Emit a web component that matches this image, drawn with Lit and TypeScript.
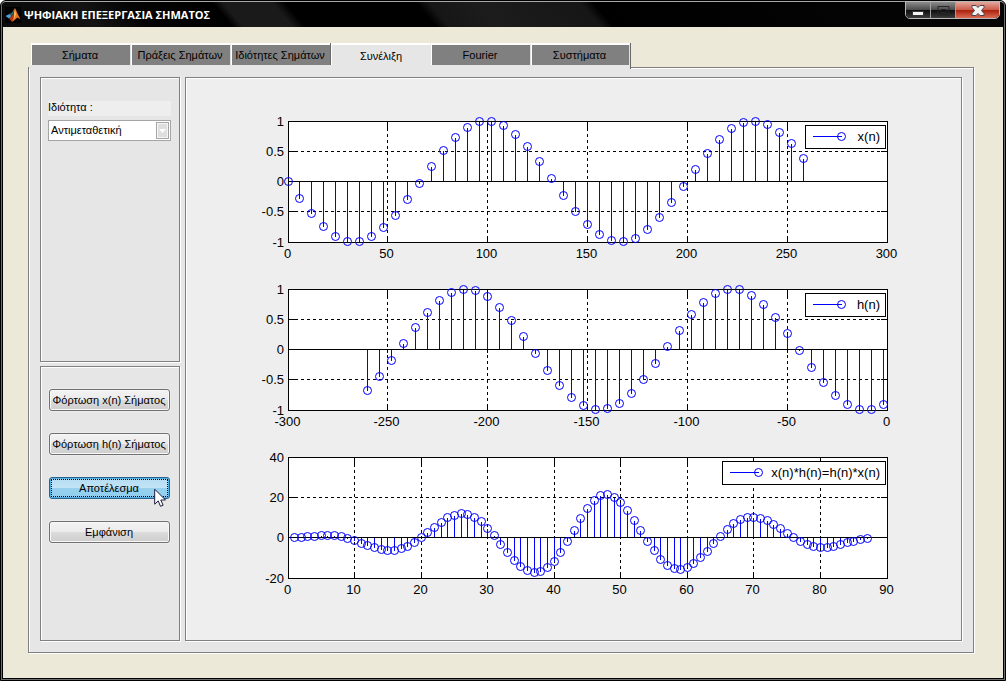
import { LitElement, html, svg, css, nothing } from "lit";
import { customElement, property } from "lit/decorators.js";

type Point = [number, number];

// Plot frame inside each chart's drawing area
const LEFT = 102;
const TOP = 23;
const WIDTH = 599;
const HEIGHT = 121;

@customElement("stem-plot")
class StemPlot extends LitElement {
  @property({ attribute: false }) points: Point[] = [];
  @property({ attribute: false }) xTicks: number[] = [];
  @property({ attribute: false }) yTicks: number[] = [];
  @property() legend = "";
  @property({ type: Number }) legendWidth = 80;

  static styles = css`
    :host { display: block; }
    .plot { display: block; width: 100%; height: auto; overflow: visible; shape-rendering: crispEdges; }
    .frame { fill: #fff; stroke: #000; }
    .edge { fill: none; stroke: #000; }
    .grid { stroke: #000; stroke-dasharray: 3 3; }
    .tick { stroke: #000; }
    .stem { stroke: #00f; fill: none; }
    .mark { stroke: #00f; fill: none; shape-rendering: auto; }
    .label { font: 13px "Liberation Sans", Arial, sans-serif; fill: #000; }
    .middle { text-anchor: middle; }
    .end { text-anchor: end; }
  `;

  render() {
    const x0 = this.xTicks[0];
    const x1 = this.xTicks[this.xTicks.length - 1];
    const y0 = this.yTicks[0];
    const y1 = this.yTicks[this.yTicks.length - 1];
    const px = (v: number) => LEFT + 0.5 + Math.floor((WIDTH * (v - x0)) / (x1 - x0) + 1e-6);
    const py = (v: number) => TOP + 0.5 + Math.floor((HEIGHT * (y1 - v)) / (y1 - y0) + 1e-6);
    const l = px(x0), r = px(x1), t = py(y1), b = py(y0);
    const zero = py(0);
    const boxLeft = 699.5 - this.legendWidth;
    const lineLeft = boxLeft + 7;

    return html`<svg class="plot" viewBox="0 0 775 168" role="img" aria-label=${this.legend}>
      <rect class="frame" x=${l} y=${t} width=${r - l} height=${b - t}></rect>
      ${this.xTicks.map((v) => svg`
        ${v === x0 || v === x1 ? nothing : svg`
          <line class="grid" x1=${px(v)} x2=${px(v)} y1=${t} y2=${b}></line>
          <line class="tick" x1=${px(v)} x2=${px(v)} y1=${t} y2=${t + 7}></line>
          <line class="tick" x1=${px(v)} x2=${px(v)} y1=${b - 7} y2=${b}></line>`}
        <text class="label middle" x=${px(v) - 1} y=${b + 15}>${v}</text>`)}
      ${this.yTicks.map((v) => svg`
        ${v === y0 || v === y1 || v === 0 ? nothing : svg`
          <line class="grid" x1=${l} x2=${r} y1=${py(v)} y2=${py(v)}></line>
          <line class="tick" x1=${l} x2=${l + 7} y1=${py(v)} y2=${py(v)}></line>
          <line class="tick" x1=${r - 7} x2=${r} y1=${py(v)} y2=${py(v)}></line>`}
        <text class="label end" x="98" y=${py(v) + 4}>${v}</text>`)}
      ${this.points.map(([x, y]) => svg`<line class="stem" x1=${px(x)} x2=${px(x)} y1=${zero} y2=${py(y)}></line>`)}
      <line class="edge" x1=${l} x2=${r} y1=${zero} y2=${zero}></line>
      ${this.points.map(([x, y]) => svg`<circle class="mark" cx=${px(x)} cy=${py(y)} r="4"></circle>`)}
      <rect class="frame" x=${boxLeft} y="27.5" width=${this.legendWidth} height="23"></rect>
      <line class="stem" x1=${lineLeft} x2=${lineLeft + 29} y1="38.5" y2="38.5"></line>
      <circle class="mark" cx=${lineLeft + 29} cy="38.5" r="4"></circle>
      <text class="label end" x="694" y="43">${this.legend}</text>
    </svg>`;
  }
}

const range = (from: number, step: number, to: number) => {
  const out: number[] = [];
  for (let v = from; v <= to; v += step) out.push(v);
  return out;
};

const xn: Point[] = range(0, 6, 258).map((n) => [n, Math.sin(n)]);
const hn: Point[] = range(-260, 6, -2).map((n) => [n, Math.sin(n)]);
const yn: Point[] = range(0, 1, xn.length + hn.length - 2).map((k) => {
  let sum = 0;
  for (let i = 0; i < xn.length; i++) {
    if (k - i >= 0 && k - i < hn.length) sum += xn[i][1] * hn[k - i][1];
  }
  return [k + 1, sum];
});

@customElement("app-root")
class AppRoot extends LitElement {
  static styles = css`
    :host { display: block; font: 11px/14px "Liberation Sans", Arial, sans-serif; color: #000; }
    * { box-sizing: border-box; }
    .window {
      display: flex; flex-direction: column; min-height: 100vh;
      border: 1px solid #000; border-radius: 6px 6px 0 0; background: #000;
    }
    .rim {
      flex: 1; display: flex; flex-direction: column;
      border: 1px solid #6e6e6e; border-top-color: #a8a8a8; border-radius: 5px 5px 0 0;
      padding: 0 1px 1px; 
    }
    .titlebar {
      height: 25px; display: flex; align-items: flex-start; justify-content: space-between;
      background: linear-gradient(50deg, #0c0c0c 0, #0c0c0c 40px, #141414 70px, #050505 110px, #000 176px, #1a1a1a 184px, #1a1a1a 222px, #000 232px, #000 332px, #161616 342px, #1c1c1c 380px, #161616 458px, #000 468px, #060606);
      border-radius: 4px 4px 0 0;
    }
    .caption { display: flex; align-items: center; gap: 3px; height: 25px; padding-left: 2px; }
    .title { margin: 0; font: bold 11px/16px "Open Sans", "Noto Sans", sans-serif; color: #fff; }
    .logo { display: block; width: 16px; height: 16px; background: #000; }
    .controls {
      display: flex; height: 18px; margin: -1px 3px 0 0; overflow: hidden;
      border: 1px solid #b8b8b8; border-radius: 0 0 5px 5px;
      position: relative;
    }
    .control { padding: 0; border: 0; border-right: 1px solid #a0a0a0; width: 25px; background: linear-gradient(#8c8c8c, #4c4c4c 48%, #0c0c0c 50%, #3c3c3c); }
    .control:last-child { border-right: 0; width: 43px; background: linear-gradient(#e3a79c, #cc5d4b 48%, #a91f0c 50%, #dc6a52); }
    .glyph { display: block; margin: auto; }
    .body { flex: 1; display: flex; flex-direction: column; padding: 16px 29px 25px 25px; background: #ece9d8; }
    .tabs {
      display: flex; align-self: flex-start; max-width: 100%; position: relative;
      margin: 0 0 -2px 1px; padding: 0 0 4px 2px; border-right: 1px solid #696969;
      background: linear-gradient(#0000 22px, #e6e6e6 22px);
    }
    .tab {
      width: 100px; height: 22px; padding: 0 2px 0 0; font: inherit; color: #000; background: #808080;
      border: 1px solid #fff; border-top-width: 2px; border-bottom: 0; border-right-color: #e0e0e0;
      flex: 0 1 auto; white-space: nowrap;
    }
    .tab:last-child { width: 99px; }
    .tab[aria-selected="true"] { background: #e6e6e6; border-right-color: #e6e6e6; padding: 1px 0 0; box-shadow: -1px 0 #696969; }
    .etched { border: 1px solid #808080; box-shadow: 1px 1px #fff, inset 1px 1px #fff; }
    .page { flex: 1; display: grid; grid-template-columns: 140px minmax(0, 1fr); gap: 5px; padding: 9px 11px 11px; background: #e6e6e6; }
    .side { display: grid; grid-template-rows: 57fr 55fr; gap: 4px; }
    .options { padding: 23px 8px 0 7px; }
    .field { display: block; height: 15px; line-height: 13px; background: #eee; margin-bottom: 4px; }
    .picker { position: relative; }
    .select {
      appearance: none; display: block; width: 100%; height: 21px; margin: 0; padding: 0 18px 1px 2px;
      font: inherit; color: #000; background: #fff; border: 1px solid #a5a5a5; border-radius: 0;
    }
    .arrow { position: absolute; right: 2px; top: 2px; pointer-events: none; }
    .actions { display: flex; flex-direction: column; gap: 22px; padding: 22px 9px 0 8px; }
    .action {
      position: relative; height: 22px; padding: 0 1px 1px 0; font: inherit; color: #000; white-space: nowrap;
      border: 1px solid #707070; border-radius: 3px;
      background: linear-gradient(#f3f3f3, #ebebeb 50%, #dcdcdc 50%, #cdcdcd); box-shadow: inset 0 0 0 1px #f8f8f8, 0 0 0 1px #ececec;
    }
    .action.hot {
      border-color: #2c628b; background: linear-gradient(#b4dcf2, #c2e4f6 50%, #98d1ef 50%, #8fcdee);
      box-shadow: inset 0 0 0 1px #4db2e6; outline: 1px dotted #000; outline-offset: -3px;
    }
    .pointer { position: absolute; left: 104px; top: 10px; pointer-events: none; }
    .charts { background: #eee; padding-top: 20px; }
  `;

  private tabs = ["Σήματα", "Πράξεις Σημάτων", "Ιδιότητες Σημάτων", "Συνέλιξη", "Fourier", "Συστήματα"];

  render() {
    return html`<div class="window"><div class="rim">
      <header class="titlebar">
        <div class="caption">
          <svg class="logo" viewBox="0 0 16 16" aria-hidden="true">
            <path d="M0.500 9 4.500 7 6.500 9 4 11.500Z" fill="#4aa3d4"></path>
            <path d="M4.500 7 7 5.500 9.500 1 8.500 7 6.500 9Z" fill="#2b6674"></path>
            <path d="M4 11.500 6.500 9 8.500 7 10 1 11.500 4 11 10 8.500 12 7 15Z" fill="#b5341c"></path>
            <path d="M9.800 1 12 5.500 15.500 12.500 12.500 10.500 9 13.500 7 15 9 9Z" fill="#ee7420"></path>
            <path d="M9.800 2 11 7 9 12 9.200 6Z" fill="#ffc35a"></path>
          </svg>
          <h1 class="title">ΨΗΦΙΑΚΗ ΕΠΕΞΕΡΓΑΣΙΑ ΣΗΜΑΤΟΣ</h1>
        </div>
        <div class="controls">
          <button class="control" aria-label="Minimize">
            <svg class="glyph" width="12" height="14"><rect x="0.500" y="8.500" width="11" height="4" fill="#f4f4f4" stroke="#333"></rect></svg>
          </button>
          <button class="control" aria-label="Maximize" disabled>
            <svg class="glyph" width="13" height="14"><path d="M1 3.500h11v9h-11zM4 6.500h5v3h-5z" fill="none" stroke="#262626"></path></svg>
          </button>
          <button class="control" aria-label="Close">
            <svg class="glyph" width="14" height="14"><path d="M1 2.500h4l2 2 2-2h4v2l-2.500 3 2.500 3v2h-4l-2-2-2 2h-4v-2l2.500-3-2.500-3z" fill="#f2f2f2" stroke="#4a4650"></path></svg>
          </button>
        </div>
      </header>
      <main class="body">
        <div class="tabs" role="tablist">
          ${this.tabs.map((t, i) => html`<button class="tab" role="tab" aria-selected=${i === 3 ? "true" : "false"}>${t}</button>`)}
        </div>
        <div class="page etched">
          <div class="side">
            <section class="options etched">
              <label class="field" for="property">Ιδιότητα :</label>
              <div class="picker">
                <select class="select" id="property"><option>Αντιμεταθετική</option></select>
                <svg class="arrow" width="13" height="17" aria-hidden="true">
                  <rect x="0.500" y="0.500" width="12" height="16" fill="#dedede" stroke="#a5a5a5"></rect>
                  <rect x="1.500" y="1.500" width="10" height="14" fill="none" stroke="#f6f6f6"></rect>
                  <path d="M3 7h7l-3.500 4z" fill="#fff"></path>
                </svg>
              </div>
            </section>
            <section class="actions etched">
              <button class="action">Φόρτωση x(n) Σήματος</button>
              <button class="action">Φόρτωση h(n) Σήματος</button>
              <button class="action hot">Αποτέλεσμα
                <svg class="pointer" width="13" height="20" aria-hidden="true">
                  <path d="M0.700 1.200v15l3.500-3.300 2.300 5.400 2.600-1.100-2.300-5.200h4.700z" fill="#fff" stroke="#1b1b3a"></path>
                </svg>
              </button>
              <button class="action">Εμφάνιση</button>
            </section>
          </div>
          <section class="charts etched">
            <stem-plot .points=${xn} .xTicks=${range(0, 50, 300)} .yTicks=${range(-1, 0.5, 1)} legend="x(n)"></stem-plot>
            <stem-plot .points=${hn} .xTicks=${range(-300, 50, 0)} .yTicks=${range(-1, 0.5, 1)} legend="h(n)"></stem-plot>
            <stem-plot .points=${yn} .xTicks=${range(0, 10, 90)} .yTicks=${range(-20, 20, 40)} legend="x(n)*h(n)=h(n)*x(n)" legendWidth="163"></stem-plot>
          </section>
        </div>
      </main>
    </div></div>`;
  }
}
